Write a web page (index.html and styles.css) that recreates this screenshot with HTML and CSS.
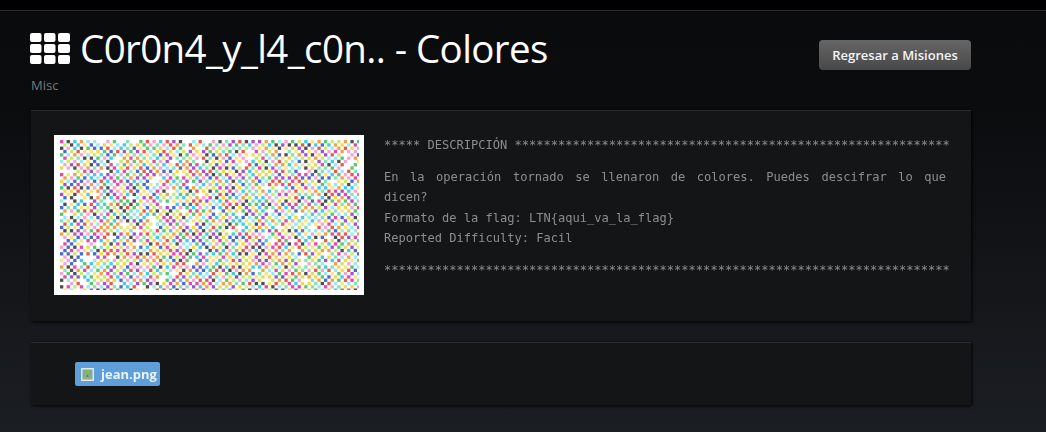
FILE: index.html
```html
<!DOCTYPE html>
<html lang="en">
<head>
    <meta charset="UTF-8">
    <meta name="viewport" content="width=device-width, initial-scale=1.0">
    <title>Misiones</title>
    <link rel="stylesheet" href="styles.css">
</head>
<body>
    <div class="topbar"></div>
    <main class="content">
        <header class="page-head">
            <div>
                <h1 class="page-title">
                    <svg class="title-icon" viewBox="0 0 40 31" aria-hidden="true">
                        <rect x="0" y="0" width="11.5" height="9" rx="2"/>
                        <rect x="14" y="0" width="11.5" height="9" rx="2"/>
                        <rect x="28" y="0" width="12" height="9" rx="2"/>
                        <rect x="0" y="11" width="11.5" height="9" rx="2"/>
                        <rect x="14" y="11" width="11.5" height="9" rx="2"/>
                        <rect x="28" y="11" width="12" height="9" rx="2"/>
                        <rect x="0" y="22" width="11.5" height="9" rx="2"/>
                        <rect x="14" y="22" width="11.5" height="9" rx="2"/>
                        <rect x="28" y="22" width="12" height="9" rx="2"/>
                    </svg>
                    C0r0n4_y_l4_c0n.. - Colores
                </h1>
                <div class="category">Misc</div>
            </div>
            <a class="back-btn" href="#">Regresar a Misiones</a>
        </header>

        <section class="panel mission">
            <div class="thumb"><canvas id="noise" width="299" height="150"></canvas></div>
            <div class="description">
                <p class="stars">***** DESCRIPCIÓN ************************************************************</p>
                <p class="body-text">En la operación tornado se llenaron de colores. Puedes descifrar lo que dicen?<br>
                Formato de la flag: LTN{aqui_va_la_flag}<br>
                Reported Difficulty: Facil</p>
                <p class="stars">******************************************************************************</p>
            </div>
        </section>

        <section class="panel files">
            <a class="file-tag" href="#">
                <svg class="file-icon" viewBox="0 0 13 13" aria-hidden="true">
                    <rect x="0" y="0" width="13" height="13" fill="#dfe8ee"/>
                    <rect x="1.5" y="1.5" width="10" height="7.5" fill="#7fa6b8"/>
                    <circle cx="6.5" cy="5" r="3" fill="#86b84a"/>
                    <rect x="5.8" y="7" width="1.4" height="3" fill="#6b7a3a"/>
                    <rect x="1.5" y="9" width="10" height="2.5" fill="#9cb060"/>
                </svg>
                jean.png
            </a>
        </section>
    </main>
    <script src="noise.js"></script>
</body>
</html>
```

FILE: styles.css
```css
html, body {
    height: 100%;
}

body {
    margin: 0;
    overflow: hidden;
    font-family: "Open Sans", sans-serif;
    color: #fff;
    background: linear-gradient(#0a0b0d 0, #0b0c0e 110px, #1b1e23 432px);
}

.topbar {
    height: 10px;
    background-color: #000;
    border-bottom: 1px solid #2a2a2c;
}

.content {
    width: 940px;
    margin-left: 31px;
}

.page-head {
    display: flex;
    justify-content: space-between;
    align-items: flex-start;
    height: 99px;
}

.page-title {
    display: flex;
    align-items: center;
    gap: 10px;
    margin: 13px 0 0 -1px;
    font-size: 38.5px;
    font-weight: 400;
    letter-spacing: -0.6px;
    line-height: 48px;
}

.title-icon {
    width: 40px;
    height: 31px;
    fill: #fff;
}

.category {
    margin-top: 4px;
    font-size: 13px;
    line-height: 18px;
    color: #7a7a7a;
}

.back-btn {
    margin-top: 29px;
    width: 152px;
    height: 30px;
    line-height: 30px;
    text-align: center;
    font-size: 13px;
    font-weight: 600;
    color: #f4f4f4;
    text-decoration: none;
    border-radius: 4px;
    background: linear-gradient(#666, #484848);
}

.panel {
    box-sizing: border-box;
    background-color: #141517;
    border-top: 1px solid #2a2b2d;
    box-shadow: 1px 1px 3px #000;
}

.mission {
    display: flex;
    align-items: flex-start;
    gap: 20px;
    height: 211px;
    padding: 24px 20px 0 23px;
}

.thumb {
    flex: none;
    width: 310px;
    height: 160px;
    background-color: #fff;
    display: flex;
    align-items: center;
    justify-content: center;
}

.thumb canvas {
    display: block;
}

.description {
    flex: 1;
    min-width: 0;
    font-family: "DejaVu Sans Mono", monospace;
    font-size: 12.05px;
    line-height: 20.3px;
    color: #8c8d8f;
}

.description p {
    margin: 0 0 11.7px;
}

.stars {
    white-space: nowrap;
}

.body-text {
    padding-right: 5px;
    text-align: justify;
}

.files {
    margin-top: 21px;
    height: 63px;
    padding: 19px 0 0 44px;
}

.file-tag {
    display: inline-flex;
    align-items: center;
    gap: 7px;
    height: 24px;
    padding: 0 3px 0 6px;
    border-radius: 2px;
    background-color: #5e9ed9;
    color: #eaf3fb;
    font-size: 13px;
    font-weight: 700;
    text-decoration: none;
}

.file-icon {
    width: 13px;
    height: 13px;
}
```

FILE: noise.js
```js
// the challenge picture: a checker of random coloured cells on white
const canvas = document.getElementById('noise');
const ctx = canvas.getContext('2d');
const colors = ['#e53ea8', '#35c8e8', '#f2d53c', '#3f62d0', '#e85040', '#50c468', '#a048cc', '#f09a40', '#444', '#f5a0d0', '#90e8f0', '#c8e860', '#ffe070', '#80e0b0'];
const cell = 3.3;

let seed = 12345;
function rand() {
    seed = (seed * 1664525 + 1013904223) % 4294967296;
    return seed / 4294967296;
}

ctx.globalAlpha = 0.95;
for (let y = 0; y * cell < canvas.height; y++) {
    for (let x = 0; x * cell < canvas.width; x++) {
        if ((x + y) % 2 === 0 && rand() < 0.95) {
            ctx.fillStyle = colors[Math.floor(rand() * colors.length)];
            ctx.fillRect(x * cell, y * cell, cell, cell);
        }
    }
}
```
